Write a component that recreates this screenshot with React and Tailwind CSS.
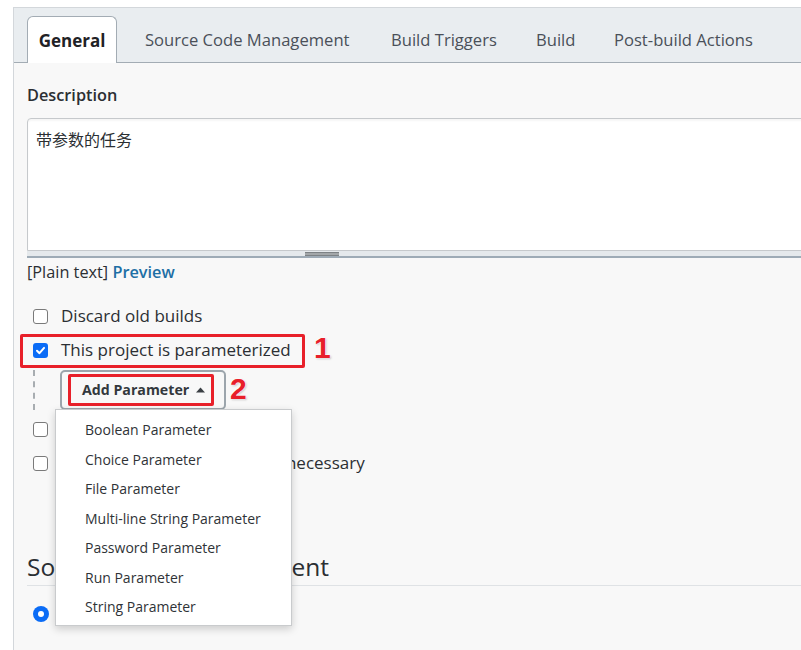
import React from "react";

function Box({ checked }) {
  if (checked) {
    return (
      <span className="w-[15px] h-[15px] rounded-[3px] bg-[#0b6cf6] flex items-center justify-center shrink-0">
        <svg width="11" height="11" viewBox="0 0 12 12">
          <path d="M2.2 6.3 L4.9 8.9 L9.9 3.2" fill="none" stroke="white" strokeWidth="2.2" strokeLinecap="round" strokeLinejoin="round" />
        </svg>
      </span>
    );
  }
  return <span className="w-[15px] h-[15px] rounded-[3px] border border-[#7a7a7a] bg-white shrink-0" />;
}

function Check({ checked, label, className = "" }) {
  return (
    <div className={"flex items-center h-[24px] " + className}>
      <div className="w-[34px] pl-[6px] flex items-center">
        <Box checked={checked} />
      </div>
      <span className="text-[17px] font-medium text-[#2b2f33] leading-[24px] whitespace-nowrap">{label}</span>
    </div>
  );
}

const menuItems = [
  "Boolean Parameter",
  "Choice Parameter",
  "File Parameter",
  "Multi-line String Parameter",
  "Password Parameter",
  "Run Parameter",
  "String Parameter",
];

export default function App() {
  return (
    <div className="w-[801px] h-[650px] bg-white overflow-hidden relative font-['Open_Sans','Noto_Sans',sans-serif] text-[#2b2f33]">
      <div className="ml-[13px] mt-[7px] border-l border-t border-[#d3d7db] bg-[#f8f8f8] h-[643px] w-[800px]">
        {/* tab bar */}
        <div className="h-[55px] bg-[#e9edf0] border-b border-[#a3acb4] flex items-end pl-[13px]">
          <div className="h-[47px] -mb-px w-[90px] bg-white border border-b-0 border-[#a3acb4] rounded-t-[6px] flex items-center justify-center pt-[1px] text-[17px] font-bold text-[#1f2226]">
            General
          </div>
          <div className="w-[28px]" />
          <div className="h-[46px] w-[246px] flex items-center pt-[2px] text-[16.6px] text-[#4a5059] whitespace-nowrap">Source Code Management</div>
          <div className="h-[46px] w-[145px] flex items-center pt-[2px] text-[16.6px] text-[#4a5059] whitespace-nowrap">Build Triggers</div>
          <div className="h-[46px] w-[78px] flex items-center pt-[2px] text-[16.6px] text-[#4a5059]">Build</div>
          <div className="h-[46px] w-[170px] flex items-center pt-[2px] text-[16.6px] text-[#4a5059] whitespace-nowrap">Post-build Actions</div>
        </div>

        {/* content */}
        <div className="pl-[13px] flex flex-col relative">
          <div className="mt-[20px] h-[24px] leading-[24px] text-[16.3px] font-semibold text-[#2b2f33]">Description</div>

          <div className="mt-[11px] w-[790px]">
            <div className="h-[133px] bg-white border border-[#c6c9cc] rounded-tl-[4px] shadow-[inset_0_2px_2px_rgba(0,0,0,0.04)] px-[8px] pt-[8px] text-[16px] leading-[24px] text-[#2b2f33] font-['Noto_Sans_CJK_SC',sans-serif]">
              带参数的任务
            </div>
            <div className="h-[7px] bg-[#e5e9ec] border-b-2 border-[#9eabb6] flex justify-center">
              <div className="ml-[-200px] w-[34px] h-[4px] mt-[1px] bg-[#a3a7a9] border-t border-b border-[#7d8285]" />
            </div>
          </div>

          <div className="mt-[2px] h-[24px] leading-[24px] text-[16.3px] text-[#2b2f33]">
            [Plain text] <span className="font-semibold text-[#1d6fa5]">Preview</span>
          </div>

          <Check className="mt-[20px]" label="Discard old builds" />

          <div className="relative mt-[10px]">
            <Check checked label="This project is parameterized" />
            <div className="absolute left-[-7px] top-[-4px] w-[285px] h-[34px] border-[3px] border-[#e8202a] rounded-[2px]" />
            <div className="absolute left-[287px] top-[-7px] text-[30px] leading-[34px] font-bold text-[#e8202a] font-['Liberation_Sans',sans-serif] [text-shadow:0_0_2px_#fff,0_0_2px_#fff,1px_1px_2px_rgba(0,0,0,0.25)]">
              1
            </div>
          </div>

          <div className="flex mt-[8px] h-[40px]">
            <div className="w-[33px] pl-[6px]">
              <div className="h-[40px] border-l-2 border-dashed border-[#a8adb1]" />
            </div>
            <div className="relative w-[166px] h-[40px] border-2 border-[#9ca5ac] rounded-[5px] flex items-center pl-[20px] text-[14.2px] font-bold text-[#33383d]">
              Add Parameter
              <svg className="ml-[7px]" width="9" height="6" viewBox="0 0 9 6">
                <polygon points="0,5.5 4.5,0.5 9,5.5" fill="#3a3f44" />
              </svg>
              <div className="absolute left-[6px] top-[2px] w-[146px] h-[32px] border-[3px] border-[#e8202a] rounded-[2px]" />
            </div>
            <div className="ml-[4px] mt-[4px] text-[30px] leading-[30px] font-bold text-[#e8202a] font-['Liberation_Sans',sans-serif] [text-shadow:0_0_2px_#fff,0_0_2px_#fff,1px_1px_2px_rgba(0,0,0,0.25)]">
              2
            </div>
          </div>

          <Check className="mt-[7px]" label="Throttle builds" />
          <Check className="mt-[10px]" label="Execute concurrent builds if necessary" />

          <div className="mt-[75px] h-[34px] leading-[34px] text-[24.5px] text-[#2b2f33] font-medium whitespace-nowrap">Source Code Management</div>
          <div className="mt-[1px] h-px bg-[#dfe2e5] w-[790px]" />

          <div className="mt-[18px] flex items-center h-[20px]">
            <div className="w-[34px] pl-[6px] flex items-center">
              <span className="w-[16px] h-[16px] rounded-full bg-[#0b6cf6] flex items-center justify-center">
                <span className="w-[6px] h-[6px] rounded-full bg-white" />
              </span>
            </div>
            <span className="text-[17px] font-medium">None</span>
          </div>
        </div>
      </div>

      {/* dropdown menu */}
      <div className="absolute left-[55px] top-[409px] w-[237px] bg-white border border-[#c9cbcd] shadow-[0_3px_8px_rgba(0,0,0,0.18)] pt-[5px] pb-[3px]">
        {menuItems.map((m) => (
          <div key={m} className="h-[29.5px] flex items-center pl-[29px] text-[14px] text-[#2f3337] whitespace-nowrap">
            {m}
          </div>
        ))}
      </div>
    </div>
  );
}
